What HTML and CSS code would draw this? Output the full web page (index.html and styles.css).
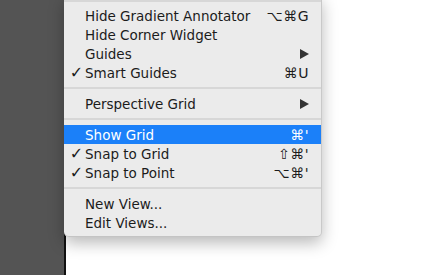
FILE: index.html
```html
<!DOCTYPE html>
<html>
<head>
<meta charset="utf-8">
<link rel="stylesheet" href="styles.css">
</head>
<body>
<div class="stage">
  <div class="side"></div>
  <div class="canvas"></div>
</div>
<div class="menu">
  <div class="sep top"></div>
  <div class="item"><span class="chk"></span><span class="label">Hide Gradient Annotator</span><span class="key">⌥⌘G</span></div>
  <div class="item"><span class="chk"></span><span class="label">Hide Corner Widget</span><span class="key"></span></div>
  <div class="item"><span class="chk"></span><span class="label">Guides</span><span class="key"><svg class="arrow" width="9" height="10" viewBox="0 0 9 10"><path d="M0 0 L9 5 L0 10 Z"/></svg></span></div>
  <div class="item"><span class="chk">✓</span><span class="label">Smart Guides</span><span class="key">⌘U</span></div>
  <div class="sep"></div>
  <div class="item"><span class="chk"></span><span class="label">Perspective Grid</span><span class="key"><svg class="arrow" width="9" height="10" viewBox="0 0 9 10"><path d="M0 0 L9 5 L0 10 Z"/></svg></span></div>
  <div class="sep"></div>
  <div class="item active"><span class="chk"></span><span class="label">Show Grid</span><span class="key">⌘'</span></div>
  <div class="item"><span class="chk">✓</span><span class="label">Snap to Grid</span><span class="key">⇧⌘'</span></div>
  <div class="item"><span class="chk">✓</span><span class="label">Snap to Point</span><span class="key">⌥⌘'</span></div>
  <div class="sep"></div>
  <div class="item"><span class="chk"></span><span class="label">New View...</span><span class="key"></span></div>
  <div class="item"><span class="chk"></span><span class="label">Edit Views...</span><span class="key"></span></div>
</div>
</body>
</html>
```

FILE: styles.css
```css
html, body {
  margin: 0;
  padding: 0;
  width: 423px;
  height: 275px;
  overflow: hidden;
  background: #ffffff;
  font-family: "DejaVu Sans", "Liberation Sans", sans-serif;
}
.stage {
  display: flex;
  height: 275px;
}
.side {
  width: 64px;
  background: #545454;
}
.canvas {
  flex: 1;
  border-left: 2px solid #111;
  background: #fff;
}
.menu {
  position: absolute;
  left: 64px;
  top: -4px;
  width: 258px;
  background: #ebebeb;
  border-right: 1px solid #c9c9c9;
  border-bottom: 1px solid #c4c4c4;
  border-radius: 0 0 5px 5px;
  box-shadow: 0 6px 16px rgba(0,0,0,0.28);
  padding-bottom: 4px;
  box-sizing: border-box;
  color: #1c1c1c;
  font-size: 13.5px;
}
.sep {
  height: 12px;
  display: flex;
  align-items: center;
}
.sep::before {
  content: "";
  flex: 1;
  height: 2px;
  background: #d7d7d7;
}
.sep.top {
  height: 10px;
}
.item {
  display: flex;
  align-items: center;
  height: 19px;
  padding-right: 12px;
}
.chk {
  width: 21px;
  text-align: center;
  padding-left: 4px;
  box-sizing: border-box;
  font-size: 16px;
  font-weight: bold;
}
.label {
  flex: 1;
}
.key {
  display: flex;
  align-items: center;
  font-size: 14px;
  letter-spacing: 0.5px;
}
.arrow {
  fill: #333;
}
.item.active {
  background: #1b80f9;
  color: #fff;
}
```
